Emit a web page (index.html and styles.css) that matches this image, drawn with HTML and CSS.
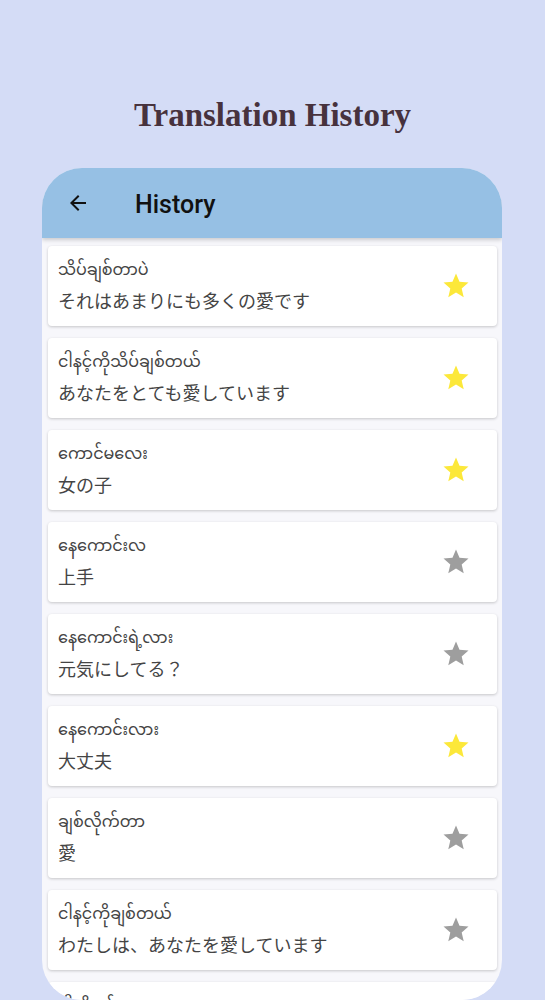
FILE: index.html
```html
<!DOCTYPE html>
<html>
<head>
<meta charset="utf-8">
<link rel="stylesheet" href="styles.css">
</head>
<body>
<h1 class="title">Translation History</h1>
<div class="phone">
  <div class="appbar">
    <svg class="back" viewBox="0 0 24 24"><path d="M20 11H7.83l5.59-5.59L12 4l-8 8 8 8 1.41-1.41L7.83 13H20v-2z"/></svg>
    <span class="appbar-title">History</span>
  </div>
  <div class="list">
    <div class="card"><div class="texts"><div class="my">သိပ်ချစ်တာပဲ</div><div class="jp">それはあまりにも多くの愛です</div></div><svg class="star on" viewBox="0 0 24 24"><path d="M12 17.27L18.18 21l-1.64-7.03L22 9.24l-7.19-.61L12 2 9.19 8.63 2 9.24l5.46 4.73L5.82 21z"/></svg></div>
    <div class="card"><div class="texts"><div class="my">ငါနင့်ကိုသိပ်ချစ်တယ်</div><div class="jp">あなたをとても愛しています</div></div><svg class="star on" viewBox="0 0 24 24"><path d="M12 17.27L18.18 21l-1.64-7.03L22 9.24l-7.19-.61L12 2 9.19 8.63 2 9.24l5.46 4.73L5.82 21z"/></svg></div>
    <div class="card"><div class="texts"><div class="my">ကောင်မလေး</div><div class="jp">女の子</div></div><svg class="star on" viewBox="0 0 24 24"><path d="M12 17.27L18.18 21l-1.64-7.03L22 9.24l-7.19-.61L12 2 9.19 8.63 2 9.24l5.46 4.73L5.82 21z"/></svg></div>
    <div class="card"><div class="texts"><div class="my">နေကောင်းလ</div><div class="jp">上手</div></div><svg class="star" viewBox="0 0 24 24"><path d="M12 17.27L18.18 21l-1.64-7.03L22 9.24l-7.19-.61L12 2 9.19 8.63 2 9.24l5.46 4.73L5.82 21z"/></svg></div>
    <div class="card"><div class="texts"><div class="my">နေကောင်းရဲ့လား</div><div class="jp">元気にしてる？</div></div><svg class="star" viewBox="0 0 24 24"><path d="M12 17.27L18.18 21l-1.64-7.03L22 9.24l-7.19-.61L12 2 9.19 8.63 2 9.24l5.46 4.73L5.82 21z"/></svg></div>
    <div class="card"><div class="texts"><div class="my">နေကောင်းလား</div><div class="jp">大丈夫</div></div><svg class="star on" viewBox="0 0 24 24"><path d="M12 17.27L18.18 21l-1.64-7.03L22 9.24l-7.19-.61L12 2 9.19 8.63 2 9.24l5.46 4.73L5.82 21z"/></svg></div>
    <div class="card"><div class="texts"><div class="my">ချစ်လိုက်တာ</div><div class="jp">愛</div></div><svg class="star" viewBox="0 0 24 24"><path d="M12 17.27L18.18 21l-1.64-7.03L22 9.24l-7.19-.61L12 2 9.19 8.63 2 9.24l5.46 4.73L5.82 21z"/></svg></div>
    <div class="card"><div class="texts"><div class="my">ငါနင့်ကိုချစ်တယ်</div><div class="jp">わたしは、あなたを愛しています</div></div><svg class="star" viewBox="0 0 24 24"><path d="M12 17.27L18.18 21l-1.64-7.03L22 9.24l-7.19-.61L12 2 9.19 8.63 2 9.24l5.46 4.73L5.82 21z"/></svg></div>
    <div class="card"><div class="texts"><div class="my">ငါ့ကိုချစ်လား</div></div></div>
  </div>
</div>
</body>
</html>
```

FILE: styles.css
```css
html, body {
  margin: 0;
  padding: 0;
}
body {
  background: #d4dcf6;
  height: 1000px;
  overflow: hidden;
}
.title {
  margin: 0;
  padding-top: 95px;
  height: 40px;
  line-height: 40px;
  text-align: center;
  font-family: "Liberation Serif", "Times New Roman", serif;
  font-weight: bold;
  font-size: 33px;
  color: #47323d;
}
.phone {
  margin: 33px 43px 0 42px;
  height: 832px;
  border-radius: 40px;
  background: #f7f7fb;
  overflow: hidden;
}
.appbar {
  height: 70px;
  background: #96c0e4;
  display: flex;
  align-items: center;
  box-shadow: 0 2px 4px rgba(0,0,0,0.18);
  position: relative;
}
.back {
  width: 24px;
  height: 24px;
  margin-left: 24px;
  fill: #111;
}
.appbar-title {
  margin-left: 45px;
  padding-top: 2px;
  font-family: Roboto, "Noto Sans", sans-serif;
  font-weight: 500;
  font-size: 25px;
  color: #111;
}
.list {
  padding: 8px 5px 0 6px;
  display: flex;
  flex-direction: column;
  gap: 12px;
}
.card {
  height: 80px;
  box-sizing: border-box;
  background: #fff;
  border-radius: 4px;
  box-shadow: 0 1px 3px rgba(0,0,0,0.2);
  display: flex;
  align-items: center;
  padding: 0 26px 0 10px;
}
.texts {
  flex: 1;
  align-self: flex-start;
  padding-top: 11px;
  font-family: "Noto Sans Myanmar", "Noto Sans", "Noto Sans CJK JP", sans-serif;
  color: #3c3c3c;
}
.my {
  font-size: 16px;
  line-height: 30px;
  height: 30px;
  color: #444;
}
.jp {
  font-family: "Noto Sans CJK JP", sans-serif;
  font-size: 18px;
  line-height: 26px;
  height: 26px;
  color: #444;
}
.star {
  width: 30px;
  height: 30px;
  fill: #9e9e9e;
}
.star.on {
  fill: #fce83a;
}
```
